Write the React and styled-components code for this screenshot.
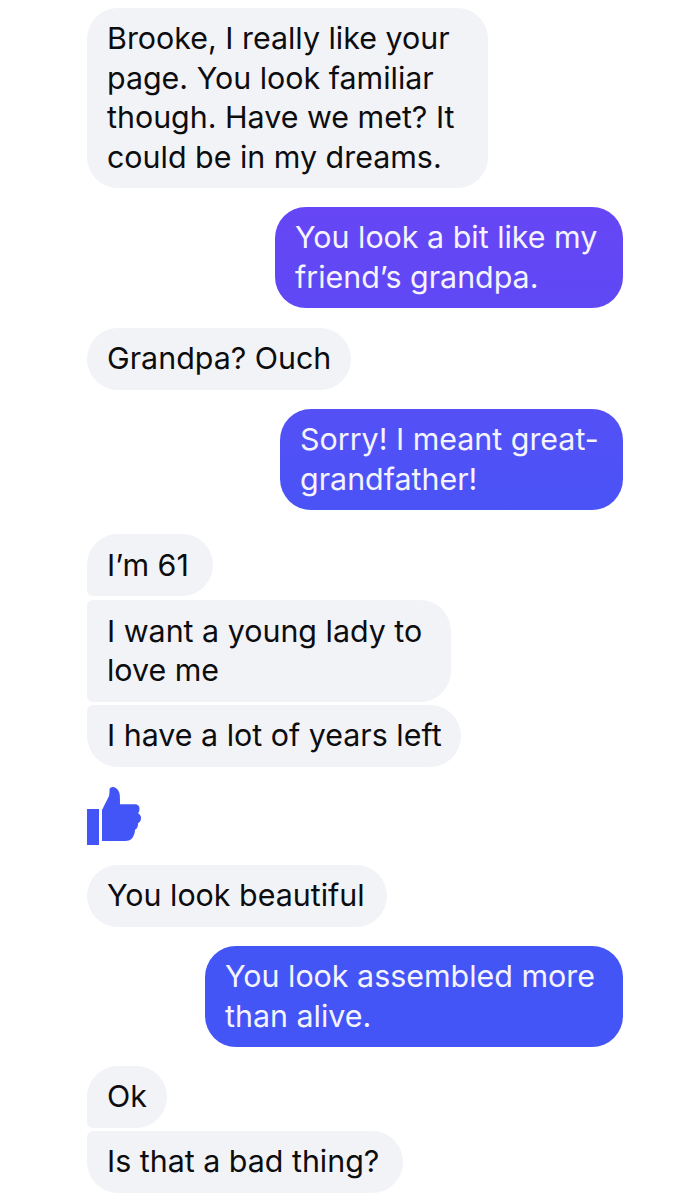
import React from 'react';
import styled, {createGlobalStyle} from 'styled-components';

const GlobalStyle = createGlobalStyle`
	html, body {
		margin: 0;
		padding: 0;
		background: #fff;
	}
`;

const messages = [
	{width: 401, lines: ['Brooke, I really like your', 'page. You look familiar', 'though. Have we met? It', 'could be in my dreams.'], gap: 18.8},
	{width: 348, mine: true, from: '#6646f5', to: '#5f48f5', lines: ['You look a bit like my', 'friend’s grandpa.'], gap: 19.6},
	{width: 264, lines: ['Grandpa? Ouch'], gap: 19},
	{width: 343, mine: true, from: '#5450f6', to: '#4a53f6', lines: ['Sorry! I meant great-', 'grandfather!'], gap: 24},
	{width: 126, lines: ['I’m 61'], gap: 4, shape: 'first'},
	{width: 364, lines: ['I want a young lady to', 'love me'], gap: 3, shape: 'middle'},
	{width: 374, lines: ['I have a lot of years left'], gap: 20, shape: 'last'},
	{thumb: true, gap: 20},
	{width: 300, lines: ['You look beautiful'], gap: 19},
	{width: 418, mine: true, from: '#4455f6', to: '#4355f6', lines: ['You look assembled more', 'than alive.'], gap: 18.6},
	{width: 80, lines: ['Ok'], gap: 3, shape: 'first'},
	{width: 316, lines: ['Is that a bad thing?'], gap: 0, shape: 'last'},
];

const corners = {
	first: '31px 31px 31px 6px',
	middle: '6px 31px 31px 6px',
	last: '6px 31px 31px 31px',
};

const ThumbIcon = () => (
	<svg width="54" height="58" viewBox="0 0 54 58" fill="#4355f6">
		<rect x="0" y="22" width="12" height="36" />
		<path d="M15 54V23L22 9C22.500 7.500 22.500 4 22.500 2.500C22.500 1 24 0 26 0C30 0.500 32.500 4 32.800 8.500C33 12 33 15 33 17.300H48C50.800 17.300 52.500 19 52.500 21.500C52.500 23.500 52 25 51 26C53 27.500 54 29 54 31C54 33.500 53 35.200 51 36.200C51.300 39 50.300 41.500 48 42.800C48 45.500 47.200 48 46 50C44 53 41.500 54 38 54Z" />
	</svg>
);

const App = () => (
	<Container>
		<GlobalStyle />
		{
			messages.map((message, index) => (
				<Row key={index} $mine={message.mine} $gap={message.gap}>
					{
						message.thumb
							? <ThumbIcon />
							: (
								<Bubble
									$width={message.width}
									$mine={message.mine}
									$from={message.from}
									$to={message.to}
									$shape={message.shape}
								>
									{message.lines.map(line => <Line key={line}>{line}</Line>)}
								</Bubble>
							)
					}
				</Row>
			))
		}
	</Container>
);

export default App;

const Container = styled.div`
	width: 699px;
	height: 1200px;
	box-sizing: border-box;
	padding: 8px 76px 0 87px;
	display: flex;
	flex-direction: column;
	background: #fff;
	overflow: hidden;
	font-family: Inter, "Open Sans", sans-serif;
`;

const Row = styled.div`
	display: flex;
	justify-content: ${props => (props.$mine ? 'flex-end' : 'flex-start')};
	margin-bottom: ${props => props.$gap}px;
`;

const Bubble = styled.div`
	width: ${props => props.$width}px;
	box-sizing: border-box;
	padding: 11.3px 20px;
	border-radius: ${props => corners[props.$shape] || '31px'};
	background: ${props => (props.$mine ? `linear-gradient(${props.$from}, ${props.$to})` : '#f2f3f7')};
	color: ${props => (props.$mine ? '#f4f3ff' : '#0d0d0f')};
	font-size: 30.4px;
	line-height: 39.4px;
	white-space: nowrap;
`;

const Line = styled.div``;
